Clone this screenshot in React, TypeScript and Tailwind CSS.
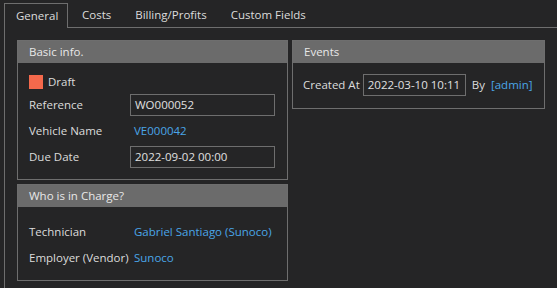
const font = { fontFamily: '"Segoe UI", "Open Sans", "Noto Sans", sans-serif' };

function Group({ title, children, className = "" }: { title: string; children: React.ReactNode; className?: string }) {
  return (
    <div className={`border border-[#6e6e6e] ${className}`}>
      <div className="h-[22px] bg-[#6b6b6b] pl-[11px] flex items-center text-[#e8e8e8]">{title}</div>
      {children}
    </div>
  );
}

function Row({ label, children }: { label: string; children: React.ReactNode }) {
  return (
    <div className="h-[26px] flex items-center whitespace-nowrap">
      <div className="w-[101px] shrink-0">{label}</div>
      {children}
    </div>
  );
}

function Field({ value, w }: { value: string; w: string }) {
  return (
    <div
      className={`${w} h-[22px] shrink-0 border border-[#6e6e6e] flex items-center px-[4px] text-[#e0e0e0] whitespace-nowrap overflow-hidden`}
    >
      {value}
    </div>
  );
}

export default function App() {
  const tabs = ["Costs", "Billing/Profits", "Custom Fields"];
  return (
    <div
      className="w-[557px] h-[288px] bg-[#252526] overflow-hidden text-[11.5px] text-[#dcdcdc] pt-[3px] pl-[4px] whitespace-nowrap"
      style={font}
    >
      <div className="flex h-[25px]">
        <div className="w-[64px] border-l border-t border-r border-[#6e6e6e] flex items-center pl-[11px]">
          General
        </div>
        {tabs.map((t) => (
          <div key={t} className="border-b border-[#6e6e6e] flex items-center pl-[14px] pr-[10px]">
            {t}
          </div>
        ))}
        <div className="flex-1 border-b border-[#6e6e6e]" />
      </div>
      <div className="border-l border-[#6e6e6e] h-[300px] pl-[12px] pt-[12px] flex gap-[4px] items-start">
        <div className="w-[271px] shrink-0 flex flex-col gap-[4px]">
          <Group title="Basic info.">
            <div className="pl-[11px] pt-[8px] pb-[9px]">
              <div className="h-[21px] flex items-center gap-[5px]">
                <div className="w-[14px] h-[14px] bg-[#f4694c]" />
                <span>Draft</span>
              </div>
              <Row label="Reference">
                <Field value="WO000052" w="w-[145px]" />
              </Row>
              <Row label="Vehicle Name">
                <span className="pl-[4px] text-[#4aa6e8]">VE000042</span>
              </Row>
              <Row label="Due Date">
                <Field value="2022-09-02 00:00" w="w-[145px]" />
              </Row>
            </div>
          </Group>
          <Group title="Who is in Charge?">
            <div className="pl-[11px] pt-[12px] pb-[9px]">
              <Row label="Technician">
                <span className="pl-[4px] text-[#4aa6e8]">Gabriel Santiago (Sunoco)</span>
              </Row>
              <Row label="Employer (Vendor)">
                <span className="pl-[4px] text-[#4aa6e8]">Sunoco</span>
              </Row>
            </div>
          </Group>
        </div>
        <Group title="Events" className="w-[253px] shrink-0">
          <div className="pl-[10px] pt-[11px] pb-[12px] flex items-center">
            <span className="mr-[3px]">Created At</span>
            <Field value="2022-03-10 10:11" w="w-[103px]" />
            <span className="ml-[6px]">By</span>
            <span className="ml-[6px] text-[#4aa6e8]">[admin]</span>
          </div>
        </Group>
      </div>
    </div>
  );
}
